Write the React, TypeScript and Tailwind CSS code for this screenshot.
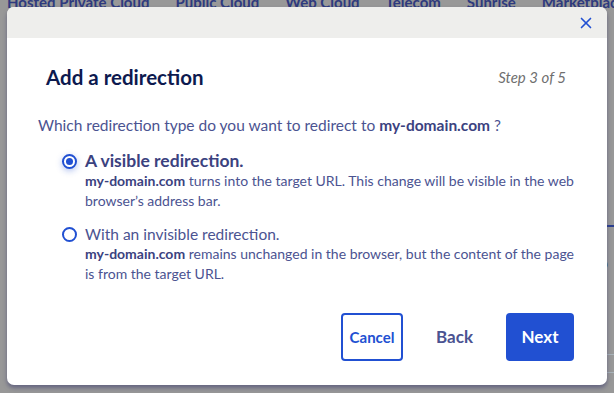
import { X } from 'lucide-react'

function Radio({ checked }: { checked: boolean }) {
  return (
    <span className={`mt-[4px] flex h-[15px] w-[15px] shrink-0 items-center justify-center rounded-full border-2 border-[#2150d2] bg-white ${checked ? 'shadow-[0_2px_6px_rgba(33,80,210,0.35)]' : ''}`}>
      {checked && <span className="h-[7px] w-[7px] rounded-full bg-[#2150d2]" />}
    </span>
  )
}

export default function App() {
  return (
    <div className="relative h-[393px] w-[614px] overflow-hidden bg-[#989898] font-['Lato',sans-serif]">
      {/* page behind the overlay */}
      <div className="absolute left-[7px] top-[-9px] flex gap-[26px] whitespace-nowrap text-[15px] font-bold text-[#2e3a7e]">
        <span>Hosted Private Cloud</span>
        <span>Public Cloud</span>
        <span>Web Cloud</span>
        <span>Telecom</span>
        <span>Sunrise</span>
        <span>Marketplace</span>
      </div>
      <div className="absolute left-[598px] top-[225px] h-[2px] w-[16px] bg-[#2b3f8f]" />
      <div className="absolute left-[599px] top-[251px] text-[16px] text-[#2e3a6e]">b</div>
      <div className="absolute left-[598px] top-[354px] h-px w-[16px] bg-[#a9b4ba]" />
      <div className="absolute left-[598px] top-[352px] text-[14px] text-[#6e6e6e]">s.</div>
      <div className="absolute left-[598px] top-[372px] h-px w-[16px] bg-[#a9b4ba]" />

      {/* dialog */}
      <div className="absolute left-[7px] top-[7px] flex h-[378px] w-[600px] flex-col overflow-hidden rounded-[7px] bg-white shadow-[0_3px_4px_rgba(60,60,110,0.55)]">
        <div className="flex h-[31px] shrink-0 items-center justify-end bg-[#eeeeec] pr-[12px]">
          <X className="h-[18px] w-[18px] text-[#2150d2]" strokeWidth={2.2} />
        </div>

        <div className="flex flex-1 flex-col px-[31px]">
          <div className="mt-[26px] flex items-center justify-between pl-[8px] pr-[10px]">
            <h2 className="text-[20.5px] font-bold leading-[26px] text-[#0d1a4f]">Add a redirection</h2>
            <span className="text-[15px] italic text-[#6f6f6f]">Step 3 of 5</span>
          </div>

          <p className="mt-[24px] text-[15.5px] leading-[22px] text-[#4b5391]">
            Which redirection type do you want to redirect to <b className="font-bold text-[#3b427f]">my-domain.com</b> ?
          </p>

          <div className="mt-[14px] flex flex-col gap-[12px] pl-[24px] text-[#4b5391]">
            <label className="flex gap-[8px]">
              <Radio checked />
              <div>
                <div className="text-[17.5px] font-bold leading-[22px] text-[#3b427f]">A visible redirection.</div>
                <div className="-mt-[1px] text-[14px] leading-[20px]">
                  <b className="font-bold text-[#3b427f]">my-domain.com</b> turns into the target URL. This change will be visible in the web browser’s address bar.
                </div>
              </div>
            </label>
            <label className="flex gap-[8px]">
              <Radio checked={false} />
              <div>
                <div className="text-[15.5px] leading-[22px]">With an invisible redirection.</div>
                <div className="-mt-[1px] text-[14px] leading-[20px]">
                  <b className="font-bold text-[#3b427f]">my-domain.com</b> remains unchanged in the browser, but the content of the page is from the target URL.
                </div>
              </div>
            </label>
          </div>

          <div className="mt-auto mb-[24px] flex items-center justify-end gap-[33px] pr-[2px]">
            <button className="h-[48px] w-[62px] rounded-[4px] border-2 border-[#2150d2] text-[15px] font-bold text-[#2150d2]">Cancel</button>
            <button className="text-[17px] font-bold text-[#4b5391]">Back</button>
            <button className="h-[48px] w-[68px] rounded-[4px] bg-[#2150d2] text-[17px] font-bold text-white">Next</button>
          </div>
        </div>
      </div>
    </div>
  )
}
